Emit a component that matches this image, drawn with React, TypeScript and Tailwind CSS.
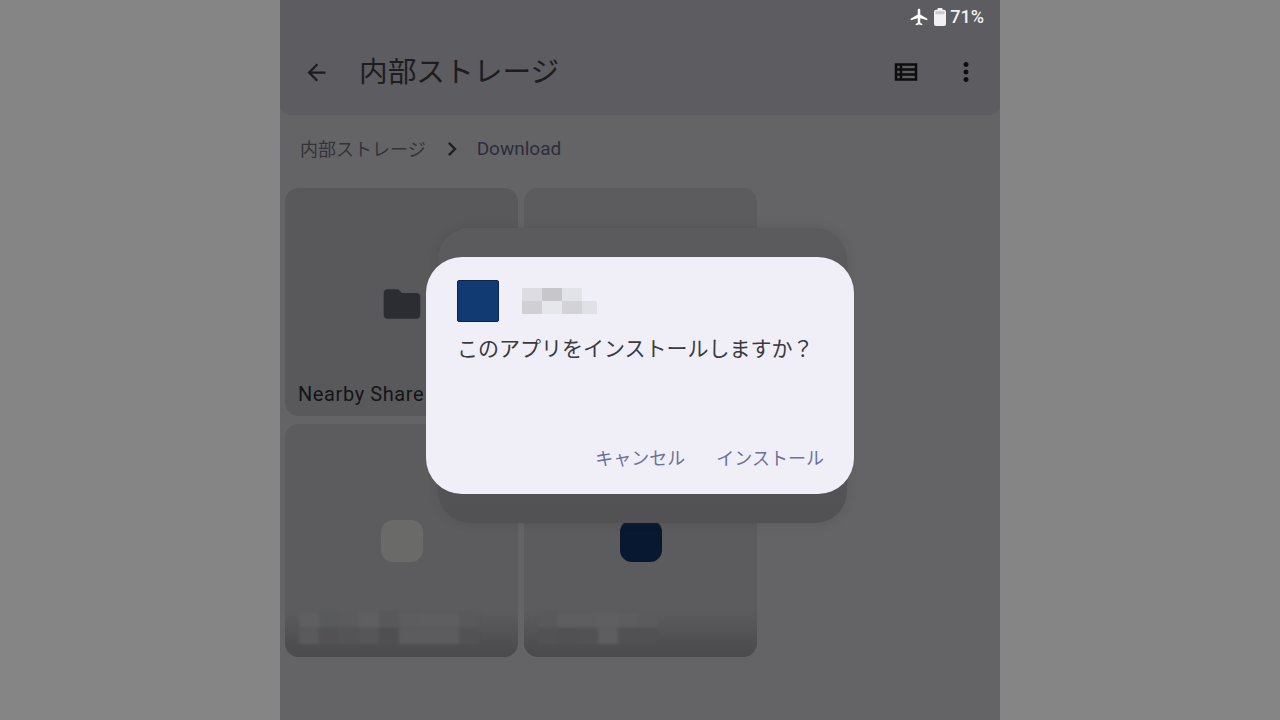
import React from 'react';
import {
  MdArrowBack,
  MdAirplanemodeActive,
  MdOutlineViewList,
  MdMoreVert,
  MdFolder,
  MdChevronRight,
} from 'react-icons/md';

const FONT = "font-['Roboto','Noto_Sans_CJK_JP',sans-serif]";

function FileCard({
  iconClass,
  blocksTop,
  blocksBottom,
}: {
  iconClass: string;
  blocksTop: string[];
  blocksBottom: string[];
}) {
  return (
    <div className="relative flex h-[233px] w-[233px] flex-col overflow-hidden rounded-[14px] bg-[#5c5c5f]">
      <div className="flex flex-1 justify-center pt-[96px]">
        <div className={`h-[42px] w-[42px] rounded-[12px] ${iconClass}`} />
      </div>
      <div className="flex h-[47px] flex-col bg-gradient-to-b from-[#5c5c5e] to-[#4a4a4c] pl-[14px] pt-[2px]">
        <div className="flex h-[16px] blur-[1.5px]">
          {blocksTop.map((c, i) => (
            <div key={i} className="h-full w-[20px]" style={{ backgroundColor: c }} />
          ))}
        </div>
        <div className="flex h-[16px] blur-[1.5px]">
          {blocksBottom.map((c, i) => (
            <div key={i} className="h-full w-[20px]" style={{ backgroundColor: c }} />
          ))}
        </div>
      </div>
    </div>
  );
}

export default function App() {
  return (
    <div className={`flex h-[720px] w-[1280px] overflow-hidden bg-[#858585] ${FONT}`}>
      <div className="w-[280px]" />

      <div className="relative flex w-[720px] flex-col bg-[#646467]">
        {/* status bar + toolbar */}
        <div className="flex h-[115px] flex-col rounded-b-[10px] bg-[#5c5c61]">
          <div className="flex h-[33px] items-center justify-end pr-[16px] text-white">
            <MdAirplanemodeActive className="ml-[1px] h-[20px] w-[20px]" />
            <svg viewBox="0 0 12 18" className="ml-[5px] h-[18px] w-[12px]" fill="#f1f1f3">
              <rect x="3.5" y="0" width="5" height="3" rx="0.8" />
              <rect x="0" y="1.8" width="12" height="16.2" rx="2" />
              <rect x="1.5" y="3.2" width="9" height="3" fill="#c9c9cc" />
            </svg>
            <span className="ml-[4px] text-[18px] font-medium leading-none text-[#f1f1f3]">71%</span>
          </div>
          <div className="flex h-[64px] items-center pl-[23px] pr-[19px] pt-[14px] text-[#17171a]">
            <MdArrowBack className="h-[27px] w-[27px] text-[#1d1d20]" />
            <span className="ml-[29px] pt-[1px] text-[28.7px] leading-none text-[#1d1d20]">内部ストレージ</span>
            <MdOutlineViewList className="ml-auto h-[30px] w-[30px] text-[#0d0d0f]" />
            <MdMoreVert className="ml-[30px] h-[30px] w-[30px] text-[#0d0d0f]" />
          </div>
        </div>

        {/* breadcrumb */}
        <div className="flex h-[67px] items-center pl-[20px] text-[18px] leading-none">
          <span className="pt-[2px] text-[#333337]">内部ストレージ</span>
          <MdChevronRight className="ml-[12px] h-[28px] w-[28px] text-[#1f1f22]" />
          <span className="ml-[11px] text-[19px] text-[#2c2d3d]">Download</span>
        </div>

        {/* grid */}
        <div className="mt-[6px] grid grid-cols-[233px_233px] gap-x-[6px] gap-y-[8px] pl-[5px]">
          <div className="flex h-[228px] w-[233px] flex-col rounded-[14px] bg-[#59595b]">
            <div className="flex flex-1 items-center justify-center pt-[38px]">
              <MdFolder className="h-[44px] w-[44px] text-[#2b2d33]" />
            </div>
            <div className="whitespace-nowrap pb-[9px] pl-[13px] text-[20px] leading-[26px] tracking-[0.6px] text-[#141417]">
              Nearby Share
            </div>
          </div>
          <div className="h-[228px] w-[233px] rounded-[14px] bg-[#5c5c5f]" />
          <FileCard
            iconClass="bg-[#6a6a68]"
            blocksTop={['#5f5f61', '#595a5c', '#5b5b5d', '#5f5f61', '#58585a', '#5d5d5f', '#5e5e60', '#5e5e60', '#59595b']}
            blocksBottom={['#5a5a5c', '#525254', '#545456', '#565658', '#4f4f51', '#5c5c5e', '#5c5c5e', '#5c5c5e', '#525254']}
          />
          <FileCard
            iconClass="bg-[#071830]"
            blocksTop={['#59595b', '#5e5e60', '#5e5e60', '#5f5f61', '#5d5d5f', '#5b5b5d']}
            blocksBottom={['#525254', '#515153', '#525254', '#5e5e60', '#515153', '#515153']}
          />
        </div>

        {/* previous dialog behind the current one */}
        <div className="absolute left-[158px] top-[228px] h-[295px] w-[409px] rounded-[32px] bg-gradient-to-b from-[#5b5b5d] to-[#525254] shadow-[0_0_8px_rgba(60,60,62,0.25)]" />

        {/* install dialog */}
        <div className="absolute left-[146px] top-[257px] flex h-[237px] w-[428px] flex-col rounded-[36px] bg-[#f0eff8] pl-[31px] pr-[30px] pt-[23px]">
          <div className="flex items-center">
            <div className="h-[42px] w-[42px] rounded-[2px] border border-[#0b2550] bg-[#123a72]" />
            <div className="ml-[23px] flex flex-col blur-[0.5px]">
              <div className="flex h-[13px]">
                <div className="w-[20px] bg-[#dcdce2]" />
                <div className="w-[20px] bg-[#c6c6cb]" />
                <div className="w-[20px] bg-[#e2e2e9]" />
              </div>
              <div className="flex h-[13px]">
                <div className="w-[20px] bg-[#cfcfd4]" />
                <div className="w-[20px] bg-[#e6e6ed]" />
                <div className="w-[20px] bg-[#d2d2d7]" />
                <div className="w-[15px] bg-[#e0e0e7]" />
              </div>
            </div>
          </div>
          <div className="mt-[12px] whitespace-nowrap text-[21px] leading-[30px] text-[#3a3a41]">
            このアプリをインストールしますか？
          </div>
          <div className="mt-auto flex justify-end gap-[31px] pb-[22px] text-[18px] leading-[26px] text-[#6c7199]">
            <span>キャンセル</span>
            <span>インストール</span>
          </div>
        </div>
      </div>

      <div className="w-[280px]" />
    </div>
  );
}
